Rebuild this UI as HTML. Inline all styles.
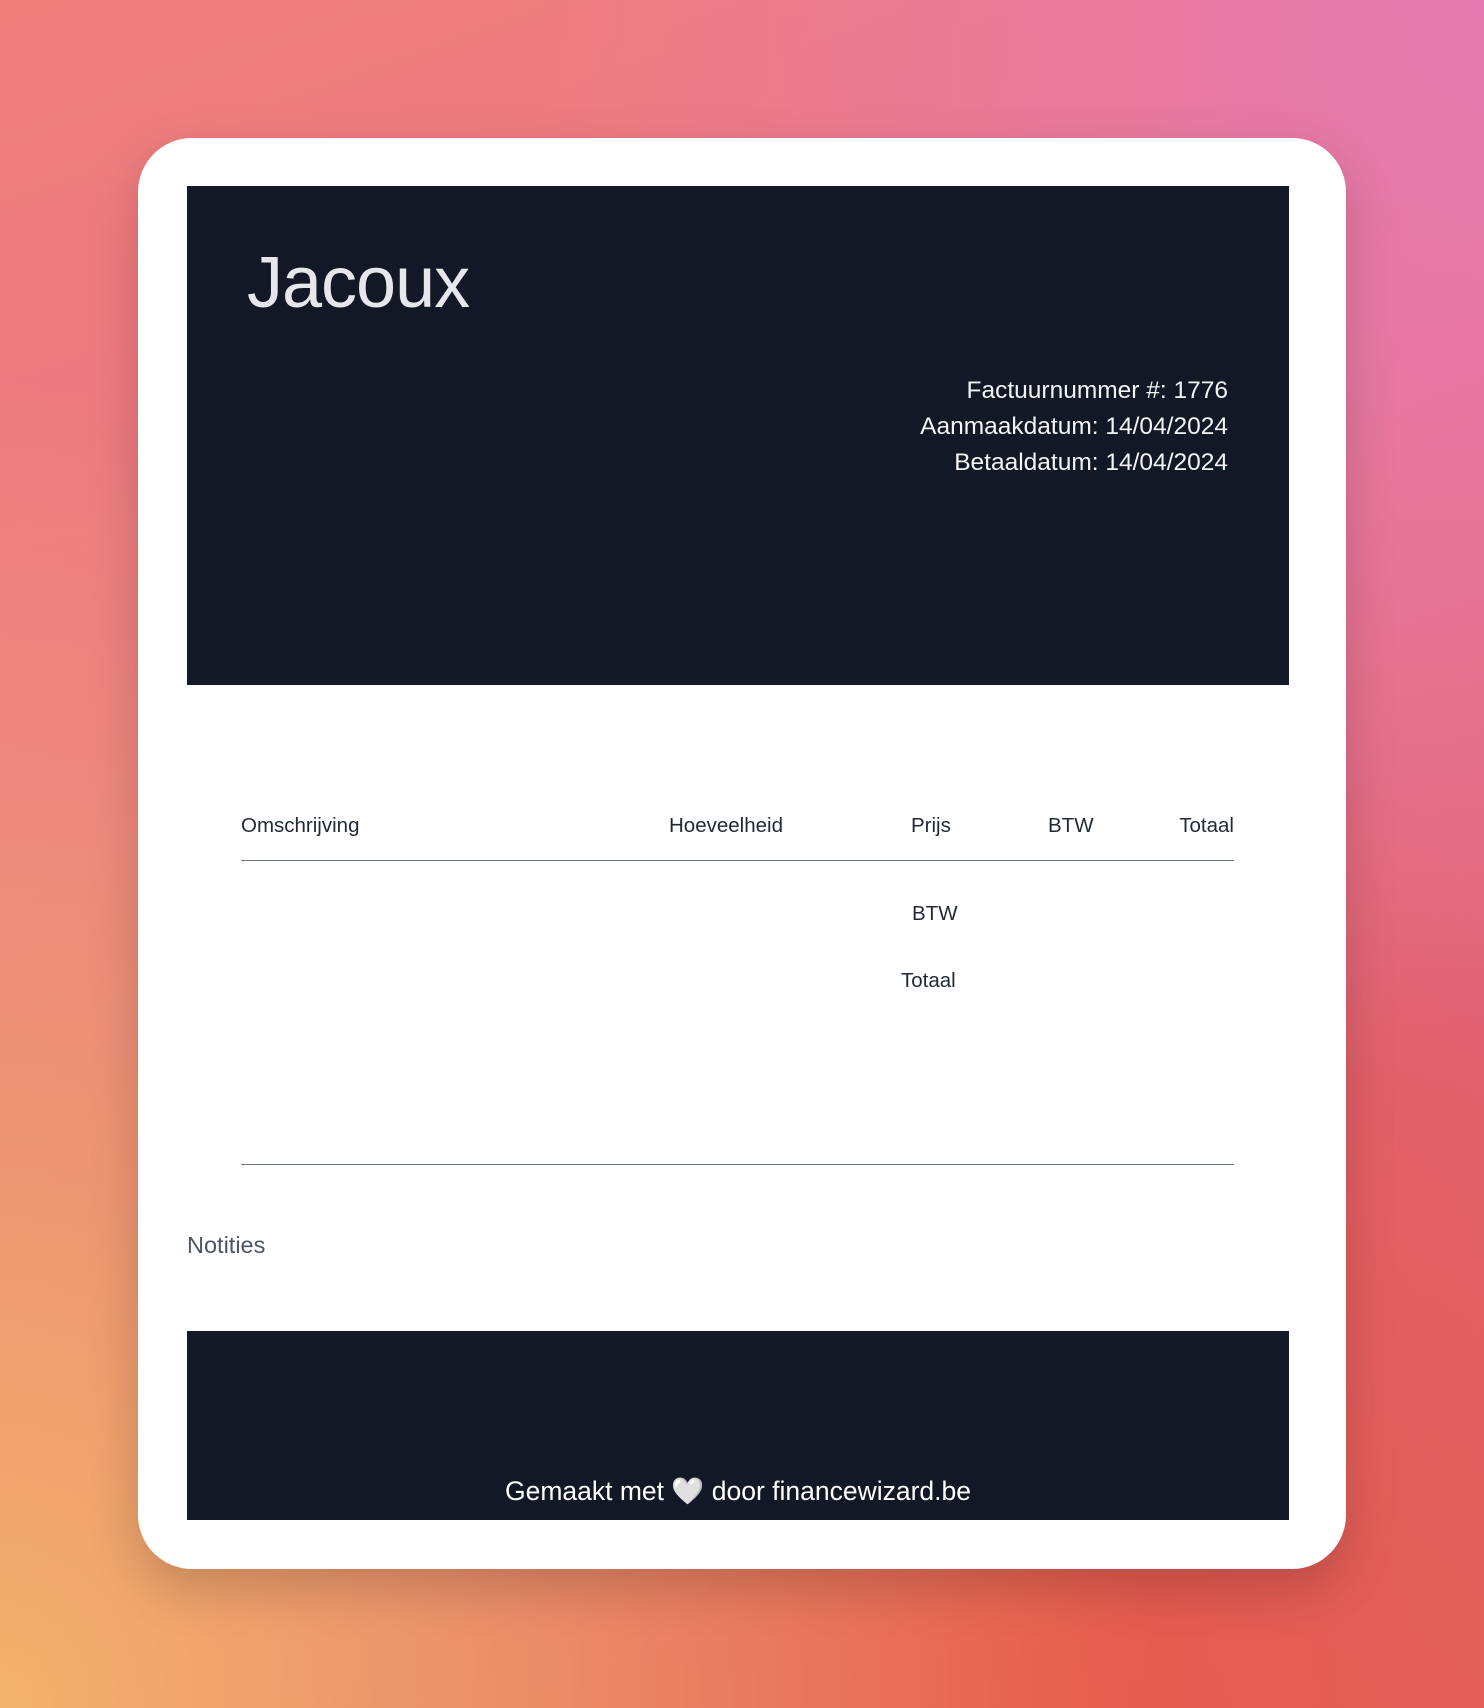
<!DOCTYPE html>
<html><head><meta charset="utf-8"><style>
html,body{margin:0;padding:0}
body{width:1484px;height:1708px;position:relative;overflow:hidden;font-family:"Liberation Sans",sans-serif;
background:
radial-gradient(ellipse at 100% 0%,#e57ab0 0%,rgba(229,122,176,0) 45%),
radial-gradient(ellipse at 0% 100%,#f3b36c 0%,rgba(243,179,108,0) 55%),
radial-gradient(ellipse at 70% 100%,#e65a4c 0%,rgba(230,90,76,0) 45%),
linear-gradient(160deg,#f07f7c 0%,#ea7585 40%,#e06272 70%,#e0605c 100%);}
.card{position:absolute;left:138px;top:138px;width:1208px;height:1431px;background:#fff;border-radius:54px;box-shadow:0 20px 50px rgba(0,0,0,0.18)}
.dark{position:absolute;background:#121826;left:187px;width:1102px}
.t{position:absolute;white-space:nowrap}
.h{color:#1f2937;font-size:20.5px;top:814px}
.line{position:absolute;left:241px;width:993px;height:1px;background:#6b7280}
</style></head><body>
<div class="card"></div>
<div class="dark" style="top:186px;height:499px"></div>
<div class="t" style="left:247px;top:242px;font-size:72px;color:#e5e7eb;letter-spacing:-1px">Jacoux</div>
<div class="t" style="right:256px;top:373px;font-size:24.5px;line-height:36px;color:#f3f4f6;text-align:right">Factuurnummer #: 1776<br>Aanmaakdatum: 14/04/2024<br>Betaaldatum: 14/04/2024</div>
<div class="t h" style="left:241px">Omschrijving</div>
<div class="t h" style="left:669px">Hoeveelheid</div>
<div class="t h" style="left:911px">Prijs</div>
<div class="t h" style="left:1048px">BTW</div>
<div class="t h" style="right:250px">Totaal</div>
<div class="line" style="top:860px"></div>
<div class="t" style="left:912px;top:902px;font-size:20.5px;color:#1f2937">BTW</div>
<div class="t" style="left:901px;top:969px;font-size:20.5px;color:#1f2937">Totaal</div>
<div class="line" style="top:1164px"></div>
<div class="t" style="left:187px;top:1232px;font-size:23.5px;color:#4b5563">Notities</div>
<div class="dark" style="top:1331px;height:189px"></div>
<div class="t" style="left:187px;width:1102px;text-align:center;top:1476px;font-size:26.5px;color:#fff">Gemaakt met 🤍 door financewizard.be</div>
</body></html>
